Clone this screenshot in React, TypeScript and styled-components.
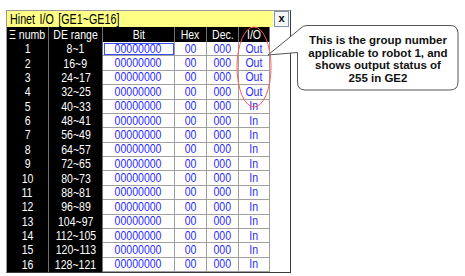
import styled, { createGlobalStyle } from "styled-components";

const GlobalStyle = createGlobalStyle`
    html, body { margin: 0; padding: 0; background: #ffffff; }
    body { width: 465px; height: 276px; overflow: hidden; }
`;

const Page = styled.div`
    position: relative;
    width: 465px;
    height: 276px;
    padding: 10px 0 0 6px;
    box-sizing: border-box;
    font-family: "Liberation Sans", Arial, sans-serif;
`;

// Window frame
const Window = styled.div`
    width: 283px;
    display: flex;
    flex-direction: column;
    border: 1px solid #9a9a9a;
    border-right-color: #3c3c3c;
    border-bottom-color: #3c3c3c;
    background: #ffffff;
`;

const TitleBar = styled.div`
    height: 16px;
    display: flex;
    align-items: stretch;
`;

const Title = styled.div`
    flex: 1;
    background: #ffff84;
    color: #000;
    font-size: 14.5px;
    line-height: 16px;
    padding-left: 3px;
    white-space: nowrap;
    overflow: hidden;
    word-spacing: 2px;
`;

// narrow system font look: squeeze a normal face horizontally
const Narrow = styled.span<{ $scale?: number }>`
    display: inline-block;
    transform: scaleX(${(p) => p.$scale ?? 0.78});
    transform-origin: ${(p) => (p.$scale ? "left center" : "center")};
`;

const CloseButton = styled.div`
    width: 15px;
    margin: 0 1px 0 1px;
    border: 1px solid #7d93b0;
    box-sizing: border-box;
    background: #f4f6f9;
    font-size: 11px;
    font-weight: bold;
    line-height: 12px;
    text-align: center;
`;

const Body = styled.div`
    display: flex;
`;

const Grid = styled.div`
    display: grid;
    grid-template-columns: 42px 54px 72px 32px 32px 31px;
    grid-template-rows: 15px repeat(16, 1fr);
    height: 245px;
    background: #000;
`;

const Gutter = styled.div`
    flex: 1;
    background: #fff;
`;

type CellKind = "head" | "label" | "data";

const Cell = styled.div<{ $kind: CellKind; $focus?: boolean }>`
    display: flex;
    align-items: center;
    justify-content: center;
    overflow: hidden;
    white-space: nowrap;
    box-sizing: border-box;
    font-size: 13.5px;
    line-height: 14px;
    background: ${(p) => (p.$kind === "data" ? "#ffffff" : "#000000")};
    color: ${(p) => (p.$kind === "data" ? "#2a2aff" : "#ffffff")};
    border-right: 1px solid ${(p) => (p.$kind === "data" ? "#a0a0a0" : "#707070")};
    border-bottom: ${(p) => (p.$kind === "data" ? "1px solid #a0a0a0" : "0")};
    ${(p) => p.$focus && `outline: 1px solid #3a4cff; outline-offset: -2px;`}
`;

// Annotation overlay
const Overlay = styled.svg`
    position: absolute;
    left: 0;
    top: 0;
    pointer-events: none;
`;

const CalloutText = styled.div`
    position: absolute;
    left: 298px;
    top: 34px;
    width: 160px;
    text-align: center;
    font-family: "Liberation Sans", Arial, sans-serif;
    font-weight: bold;
    font-size: 11.5px;
    line-height: 12.5px;
    color: #111;
`;

const rows = Array.from({ length: 16 }, (_, i) => ({
    n: i + 1,
    range: `${(i + 1) * 8}~${(i + 1) * 8 - 7}`,
    io: i < 4 ? "Out" : "In",
}));

function App() {
    return (
        <Page>
            <GlobalStyle />
            <Window>
                <TitleBar>
                    <Title>
                        <Narrow $scale={0.74}>Hinet I/O [GE1~GE16]</Narrow>
                    </Title>
                    <CloseButton>x</CloseButton>
                </TitleBar>
                <Body>
                    <Grid>
                        <Cell $kind="head"><Narrow>Ξ numb</Narrow></Cell>
                        <Cell $kind="head"><Narrow>DE range</Narrow></Cell>
                        <Cell $kind="head"><Narrow>Bit</Narrow></Cell>
                        <Cell $kind="head"><Narrow>Hex</Narrow></Cell>
                        <Cell $kind="head"><Narrow>Dec.</Narrow></Cell>
                        <Cell $kind="head"><Narrow>I/O</Narrow></Cell>
                        {rows.map((r) => [
                            <Cell key={`n${r.n}`} $kind="label"><Narrow>{r.n}</Narrow></Cell>,
                            <Cell key={`r${r.n}`} $kind="label"><Narrow>{r.range}</Narrow></Cell>,
                            <Cell key={`b${r.n}`} $kind="data" $focus={r.n === 1}><Narrow>00000000</Narrow></Cell>,
                            <Cell key={`h${r.n}`} $kind="data"><Narrow>00</Narrow></Cell>,
                            <Cell key={`d${r.n}`} $kind="data"><Narrow>000</Narrow></Cell>,
                            <Cell key={`i${r.n}`} $kind="data"><Narrow>{r.io}</Narrow></Cell>,
                        ])}
                    </Grid>
                    <Gutter />
                </Body>
            </Window>
            <Overlay width="465" height="276" viewBox="0 0 465 276">
                <ellipse cx="254" cy="67" rx="17" ry="40" fill="none" stroke="#ff5a5a" strokeWidth="1" />
                <path
                    d="M307 25.5 H450 Q458 25.5 458 33.5 V82 Q458 90 450 90 H305 Q297.5 90 297.5 82 V52.5 L268 55 L301 28 Q303 25.5 307 25.5 Z"
                    fill="#ffffff"
                    stroke="#555"
                    strokeWidth="1"
                />
            </Overlay>
            <CalloutText>
                This is the group number<br />
                applicable to robot 1, and<br />
                shows output status of<br />
                255 in GE2
            </CalloutText>
        </Page>
    );
}

export default App;
